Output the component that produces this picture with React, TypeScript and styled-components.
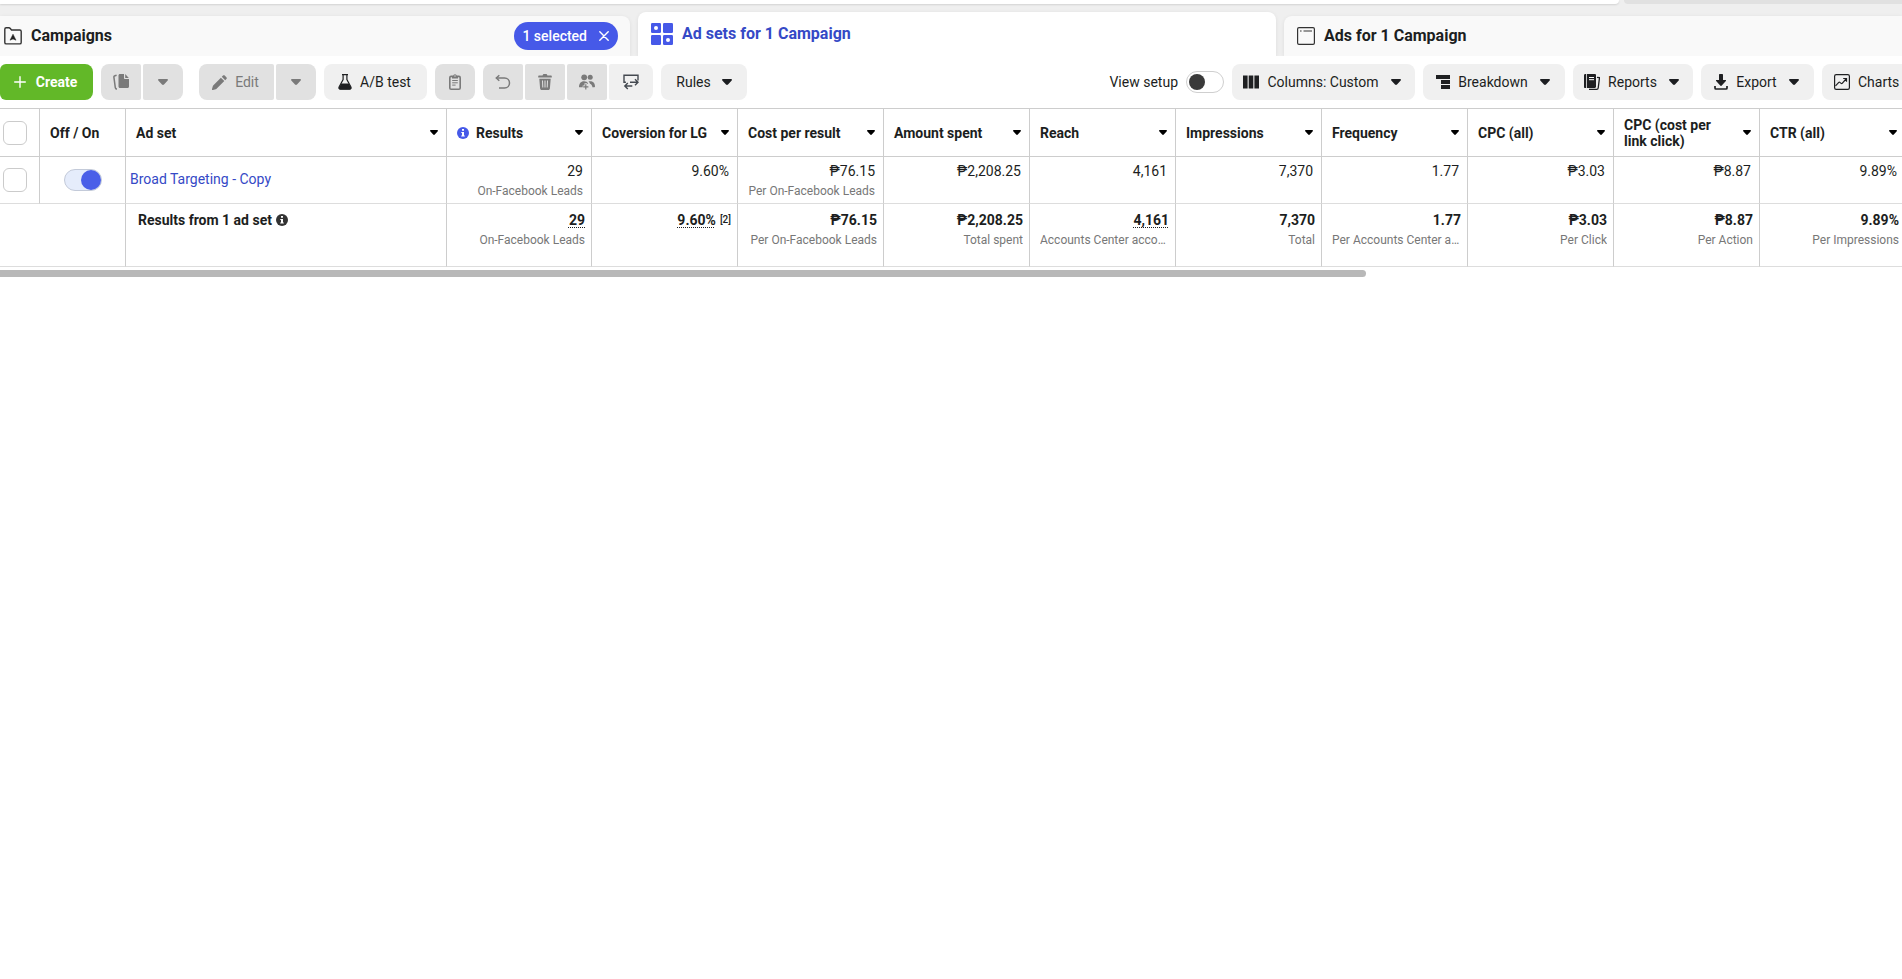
import React from "react";
import styled, { createGlobalStyle, css } from "styled-components";

const color = {
  ink: "#1c1e21",
  icon: "#1f2022",
  muted: "#777777",
  disabled: "#7a7a7a",
  blue: "#4659e8",
  link: "#3549c6",
  green: "#62b828",
  line: "#cdcdcd",
  softLine: "#dddddd",
};

const GlobalStyle = createGlobalStyle`
  *, *::before, *::after { box-sizing: border-box; }
  body {
    margin: 0;
    background: #fff;
    color: ${color.ink};
    font-family: Roboto, "Liberation Sans", sans-serif;
    font-size: 14px;
    line-height: 20px;
    overflow-x: hidden;
  }
  button, input { font: inherit; color: inherit; margin: 0; }
  svg { display: block; flex: none; }
`;

/* ---------- Top strip and tabs ---------- */

const TabArea = styled.header`
  background: #efefef;
  overflow: hidden;
`;

const TopStrip = styled.div`
  display: grid;
  grid-template-columns: 1619fr 278fr;
  gap: 5px;
  height: 4px;
`;

const StripMain = styled.div`
  background: #fff;
  border-bottom-right-radius: 6px;
  box-shadow: 0 1px 2px rgba(0, 0, 0, 0.12);
`;

const StripSide = styled.div`
  background: #e1e1e1;
  border-bottom-left-radius: 4px;
`;

const TabList = styled.nav`
  display: grid;
  grid-template-columns: 630fr 638fr 618fr;
  align-items: end;
  gap: 8px;
  padding-top: 8px;
`;

const Tab = styled.div<{ $active?: boolean; $place?: "first" | "last" }>`
  display: flex;
  align-items: center;
  justify-content: space-between;
  height: ${(p) => (p.$active ? 44 : 40)}px;
  padding: 0 12px 0 ${(p) => (p.$place === "first" ? 4 : 13)}px;
  border-radius: ${(p) => (p.$place === "first" ? "0 8px 0 0" : p.$place === "last" ? "8px 0 0 0" : "8px 8px 0 0")};
  background: ${(p) => (p.$active ? "#fff" : "#f9f9f9")};
  box-shadow: 0 1px 4px rgba(0, 0, 0, 0.08);
`;

const TabLink = styled.a<{ $active?: boolean }>`
  display: flex;
  align-items: center;
  gap: 9px;
  color: ${(p) => (p.$active ? color.link : color.ink)};
  font-size: 16px;
  font-weight: 700;
  text-decoration: none;
  padding-bottom: ${(p) => (p.$active ? 1 : 0)}px;
`;

const SelectedPill = styled.button`
  display: flex;
  align-items: center;
  gap: 12px;
  height: 28px;
  padding: 0 9px 0 8px;
  border: 0;
  border-radius: 14px;
  background: ${color.blue};
  color: #fff;
  font-size: 14px;
  font-weight: 500;
`;

/* ---------- Toolbar ---------- */

const Toolbar = styled.div`
  display: flex;
  justify-content: space-between;
  padding: 8px 0;
  overflow: hidden;
`;

const ToolGroup = styled.div`
  display: flex;
  align-items: center;
  gap: 8px;
`;

const Split = styled.div<{ $spaced?: boolean }>`
  display: flex;
  gap: 2px;
  margin-right: ${(p) => (p.$spaced ? 8 : 0)}px;

  > button { border-radius: 2px; }
  > button:first-child { border-radius: 8px 2px 2px 8px; }
  > button:last-child { border-radius: 2px 8px 8px 2px; }
`;

const ToolButton = styled.button<{ $w?: number; $primary?: boolean; $edge?: boolean; $gap?: number; $end?: number }>`
  display: flex;
  align-items: center;
  justify-content: center;
  gap: ${(p) => p.$gap ?? 8}px;
  height: 36px;
  min-width: ${(p) => p.$w ?? 40}px;
  padding: 0 ${(p) => p.$end ?? 0}px 0 0;
  border: 0;
  border-radius: 8px;
  background: #f0f0f0;
  color: ${color.ink};
  white-space: nowrap;

  &:disabled {
    background: #e1e1e1;
    color: ${color.disabled};
  }

  ${(p) =>
    p.$primary &&
    css`
      background: ${color.green};
      color: #fff;
      font-weight: 700;
      border-radius: 6px 8px 8px 6px;
    `}

  ${(p) =>
    p.$edge &&
    css`
      justify-content: flex-start;
      padding-left: 12px;
      border-radius: 8px 0 0 8px;
    `}
`;

const CaretSlot = styled.span`
  display: flex;
  padding-left: 4px;
`;

const SetupLabel = styled.label`
  display: flex;
  align-items: center;
  gap: 8px;
`;

const Switch = styled.input<{ $solid?: boolean }>`
  appearance: none;
  display: flex;
  align-items: center;
  flex: none;
  width: 38px;
  height: 22px;
  padding: 0 ${(p) => (p.$solid ? 0 : 2)}px;
  border: 1px solid #cfcfcf;
  border-radius: 11px;
  background: #fff;

  &::before {
    content: "";
    width: ${(p) => (p.$solid ? 20 : 16)}px;
    height: ${(p) => (p.$solid ? 20 : 16)}px;
    border-radius: 50%;
    background: #3a3a3a;
  }

  &:checked {
    justify-content: flex-end;
    background: #e5ecfb;
    border-color: #c3cad9;
  }

  &:checked::before { background: #4a5fe8; }
`;

/* ---------- Table ---------- */

const TableScroller = styled.div`
  overflow: hidden;
`;

const Table = styled.table`
  table-layout: fixed;
  width: 1906px;
  min-width: 100%;
  border-collapse: separate;
  border-spacing: 0;
  border-top: 1px solid ${color.line};
`;

const HeadCell = styled.th`
  height: 48px;
  padding: 0 8px 0 10px;
  border-right: 1px solid ${color.line};
  border-bottom: 1px solid ${color.line};
  font-size: 14px;
  font-weight: 700;
  line-height: 16px;
  text-align: left;
  vertical-align: middle;
`;

const HeadInner = styled.div`
  display: flex;
  align-items: center;
  justify-content: space-between;
  gap: 12px;
`;

const HeadLabel = styled.span`
  display: flex;
  align-items: center;
  gap: 7px;
`;

const BodyCell = styled.td<{ $name?: boolean }>`
  height: 47px;
  padding: 4px 8px 0 10px;
  border-right: 1px solid ${color.line};
  border-bottom: 1px solid ${color.softLine};
  text-align: right;
  vertical-align: top;

  ${(p) =>
    p.$name &&
    css`
      padding: 0 4px 2px;
      text-align: left;
      vertical-align: middle;
    `}
`;

const CheckHead = styled(HeadCell)`
  padding: 0 3px;
`;

const CheckCell = styled(BodyCell)`
  padding: 0 3px;
  vertical-align: middle;
`;

const SwitchCell = styled(BodyCell)`
  padding: 0 20px 0 24px;
  vertical-align: middle;
`;

const FootCell = styled.td`
  height: 63px;
  padding: 6px 6px 0 10px;
  border-right: 1px solid ${color.line};
  border-bottom: 1px solid ${color.softLine};
  text-align: right;
  vertical-align: top;
  font-weight: 700;
`;

const FootTitle = styled.div`
  display: flex;
  align-items: center;
  gap: 4px;
  padding-left: 2px;
`;

const Checkbox = styled.input`
  appearance: none;
  display: block;
  width: 24px;
  height: 24px;
  border: 1px solid #cbcbcb;
  border-radius: 6px;
  background: #fff;
`;

const NameLink = styled.a`
  color: ${color.link};
  text-decoration: none;
`;

const SubText = styled.div`
  overflow: hidden;
  color: ${color.muted};
  font-size: 12px;
  font-weight: 400;
  text-overflow: ellipsis;
  white-space: nowrap;
`;

const Dotted = styled.span`
  text-decoration: underline dotted 1px;
  text-decoration-skip-ink: none;
  text-underline-offset: 2px;
`;

const Note = styled.sup`
  margin-left: 4px;
  font-size: 10px;
  font-weight: 500;
  line-height: 10px;
  vertical-align: 2px;
`;

const ScrollTrack = styled.div`
  padding-top: 3px;
`;

const ScrollThumb = styled.div`
  width: 71.8%;
  height: 7px;
  border-radius: 0 4px 4px 0;
  background: #b8b8b8;
`;

/* ---------- Icons ---------- */

const Caret = ({ small }: { small?: boolean }) => (
  <svg width={small ? 8 : 10} height={small ? 5 : 6} viewBox="0 0 10 6" aria-hidden="true" preserveAspectRatio="none">
    <path d="M1 0h8c.9 0 1.300.9.7 1.500L6 5.500c-.6.6-1.400.6-2 0L.3 1.500C-.3.9.1 0 1 0z" fill={small ? "#000" : "currentColor"} />
  </svg>
);

const InfoIcon = ({ fill }: { fill: string }) => (
  <svg width="12" height="12" viewBox="0 0 12 12" aria-hidden="true">
    <circle cx="6" cy="6" r="6" fill={fill} />
    <path d="M5 2.100h2v1.700H5zM4.300 4.900H7v3.600h.8v1H4.200v-1H5V5.900h-.7z" fill="#fff" />
  </svg>
);

const FolderIcon = () => (
  <svg width="18" height="18" viewBox="0 0 18 18" aria-hidden="true">
    <path d="M.8 2.300C.8 1.400 1.300.8 2.200.8h2.700c.6 0 1 .2 1.400.7l1.200 1.500h8.300c.9 0 1.400.6 1.400 1.400v11c0 .9-.5 1.500-1.400 1.500H2.200c-.9 0-1.400-.6-1.400-1.500z" fill="none" stroke="#333" strokeWidth="1.400" />
    <path d="M9 7.200l3 6-3-1.300-3 1.300z" fill="#222" stroke="#222" strokeWidth=".5" strokeLinejoin="round" />
  </svg>
);

const AdSetsIcon = () => (
  <svg width="22" height="22" viewBox="0 0 22 22" aria-hidden="true">
    <g fill={color.blue}>
      <rect width="10" height="10" rx="1.200" />
      <rect x="12" width="10" height="10" rx="1.200" />
      <rect y="12" width="10" height="10" rx="1.200" />
      <rect x="12" y="12" width="10" height="10" rx="1.200" />
    </g>
    <circle cx="5" cy="5" r="2" fill="#fff" />
    <circle cx="17" cy="17" r="2" fill="#fff" />
  </svg>
);

const AdsIcon = () => (
  <svg width="18" height="18" viewBox="0 0 18 18" aria-hidden="true">
    <rect x=".6" y=".6" width="16.800" height="16.800" rx="1.400" fill="none" stroke="#333" strokeWidth="1.200" />
    <path d="M3 4h1.600M6.500 4H15" stroke="#777" strokeWidth="1.400" />
  </svg>
);

const CloseIcon = () => (
  <svg width="10" height="10" viewBox="0 0 10 10" aria-hidden="true">
    <path d="M.8.8l8.400 8.400M9.200.8L.8 9.200" stroke="#fff" strokeWidth="1.400" strokeLinecap="round" />
  </svg>
);

const PlusIcon = () => (
  <svg width="12" height="12" viewBox="0 0 12 12" aria-hidden="true">
    <path d="M6 .7v10.600M.7 6h10.600" stroke="#fff" strokeWidth="1.400" strokeLinecap="round" />
  </svg>
);

const DuplicateIcon = () => (
  <svg width="16" height="16" viewBox="0 0 16 16" aria-hidden="true" fill="currentColor">
    <path d="M7 0h4v4.300c0 .5.300.7.700.7H16v7.500c0 .8-.6 1.500-1.500 1.500H7c-.9 0-1.500-.7-1.500-1.500v-11C5.500.6 6.100 0 7 0z" />
    <path d="M12.200 0l3.600 3.900h-3.600z" />
    <path d="M3.600 1.200L1.900 1.700c-.7.200-1.100.8-1 1.500L2.300 13.600c.1.800.6 1.300 1.600 1.600" fill="none" stroke="currentColor" strokeWidth="1.500" />
  </svg>
);

const PencilIcon = () => (
  <svg width="15" height="15" viewBox="0 0 15 15" aria-hidden="true" fill="currentColor">
    <path d="M11 .6c.5-.6 1.200-.6 1.700 0l1.700 1.700c.5.5.5 1.200 0 1.700l-1.200 1.200-3.400-3.400zM8.900 2.700l3.400 3.400-7.500 7.500c-.3.300-.6.500-1 .6L1 15c-.7.100-1.100-.3-1-1l.8-2.800c.1-.4.300-.7.600-1z" />
  </svg>
);

const FlaskIcon = () => (
  <svg width="14" height="16" viewBox="0 0 14 16" aria-hidden="true">
    <path d="M4 .6h6M5.100.6v5L1.200 12.800c-.7 1.300 0 2.300 1.300 2.300h9c1.300 0 2-1 1.300-2.300L8.900 5.600v-5" fill="none" stroke={color.icon} strokeWidth="1.200" />
    <path d="M3.200 9.500h7.600l2.200 4c.5 1-.1 2-1.300 2H2.300c-1.200 0-1.800-1-1.300-2z" fill={color.icon} />
  </svg>
);

const ClipboardIcon = () => (
  <svg width="12" height="16" viewBox="0 0 12 16" aria-hidden="true">
    <rect x=".8" y="2.400" width="10.400" height="12.800" rx="1.300" fill="none" stroke="currentColor" strokeWidth="1.600" />
    <path d="M3 4.500V2.300h1.200C4.300.9 5 .2 6 .2s1.700.7 1.800 2.100H9v2.200z" fill="currentColor" />
    <circle cx="6" cy="2" r=".7" fill="#e1e1e1" />
    <path d="M3.200 6.500h5.600M3.200 8.800h5.600M3.200 11.100h3.400" stroke="currentColor" strokeWidth="1" />
  </svg>
);

const UndoIcon = () => (
  <svg width="16" height="16" viewBox="0 0 16 16" aria-hidden="true">
    <path d="M1.500 4H9.500c3 0 5 2.200 5 5s-2 5-5 5H4" fill="none" stroke="currentColor" strokeWidth="1.500" />
    <path d="M4.300 1.300L1.300 4l3 2.700" fill="none" stroke="currentColor" strokeWidth="1.500" />
  </svg>
);

const TrashIcon = () => (
  <svg width="14" height="16" viewBox="0 0 14 16" aria-hidden="true">
    <path d="M4.600 1.500C4.700.6 5.200 0 6.100 0h1.800c.9 0 1.400.6 1.500 1.500h3.400c.6 0 1 .4 1 1V3.500H.2V2.500c0-.6.4-1 1-1zM1.300 4.700h11.400l-.8 9.800c-.1.900-.7 1.500-1.600 1.500H3.700c-.9 0-1.500-.6-1.600-1.500z" fill="currentColor" />
    <path d="M4.500 6.500l.3 7M7 6.500v7M9.500 6.500l-.3 7" stroke="#e1e1e1" strokeWidth="1" />
  </svg>
);

const PeopleIcon = () => (
  <svg width="16" height="16" viewBox="0 0 16 16" aria-hidden="true">
    <g fill="currentColor">
      <circle cx="5.200" cy="3.300" r="2.900" />
      <circle cx="11.200" cy="3.300" r="2.500" />
      <path d="M0 13c0-3.500 1.800-5.800 5-5.800 2 0 3.400.8 4.200 2.300-1.700.2-3.200 1.800-3.200 3.800H.5c-.3 0-.5 0-.5-.3zM9.500 7.500c3.700-.8 6.500 1.200 6.500 5 0 .5-.2.800-.6.800h-2c0-1.700-.9-3-2.400-3.600-.2-.8-.7-1.500-1.500-2.200z" />
    </g>
    <path d="M6.800 9.300v6.700M3.700 12.900h6.200" stroke="#e1e1e1" strokeWidth="2.600" />
    <path d="M6.800 10.300v5.300M4.200 12.900h5.200" stroke="currentColor" strokeWidth="1.200" />
  </svg>
);

const SwapIcon = () => (
  <svg width="16" height="16" viewBox="0 0 16 16" aria-hidden="true" fill="none" stroke="#444950" strokeWidth="1.400">
    <path d="M2.900 8.300H1V1.200h14v5.300" />
    <path d="M14.800 8.200H7M12 5.200l3 3-3 3M9.300 12H1.500M4.800 9l-3 3 3 3" />
  </svg>
);

const ColumnsIcon = () => (
  <svg width="16" height="14" viewBox="0 0 16 14" aria-hidden="true" fill={color.icon}>
    <path d="M0 .4h4.600v13.200H0zM5.700.4h4.600v13.200H5.700zM11.400.4H16v13.200h-4.600z" />
  </svg>
);

const BreakdownIcon = () => (
  <svg width="14" height="14" viewBox="0 0 14 14" aria-hidden="true" fill={color.icon}>
    <path d="M0 0h14v4H0zM5 5h9v4H5zM5 10h9v4H5z" />
  </svg>
);

const ReportsIcon = () => (
  <svg width="16" height="16" viewBox="0 0 16 16" aria-hidden="true">
    <path d="M0 1.500C0 .8.300.2 1 0h1.200v14H1c-.7 0-1-.6-1-1.300zM3 0h7.800c.7 0 1.200.5 1.200 1.200v11.600c0 .7-.5 1.200-1.200 1.200H3z" fill={color.icon} />
    <path d="M5 3.500h5M5 5.700h5" stroke="#fff" strokeWidth="1" />
    <path d="M13 3.300l2.500.4-1.300 10.300c-.1.900-.6 1.300-1.500 1.300H5" fill="none" stroke={color.icon} strokeWidth="1.300" />
  </svg>
);

const ExportIcon = () => (
  <svg width="14" height="16" viewBox="0 0 14 16" aria-hidden="true" fill={color.icon}>
    <path d="M5 .7C5 .2 5.300 0 5.700 0h2.600c.4 0 .7.200.7.700V6h2.500c.5 0 .7.500.4.900L7.500 11.700c-.3.400-.7.400-1 0L2.100 6.900c-.3-.4-.1-.9.4-.9H5z" />
    <path d="M1 12v2c0 .7.300 1 1 1h10c.7 0 1-.3 1-1v-2" fill="none" stroke={color.icon} strokeWidth="1.700" />
  </svg>
);

const ChartsIcon = () => (
  <svg width="16" height="16" viewBox="0 0 16 16" aria-hidden="true" fill="none" stroke={color.icon} strokeWidth="1.200">
    <rect x=".6" y=".6" width="14.800" height="14.800" rx="1.600" />
    <path d="M1.500 11.800l3.300-3.400c.4-.4.700-.4 1.100 0l1.200 1c.4.400.8.300 1.100 0L12 5M9.200 4.500h3.300v3.300" />
  </svg>
);

/* ---------- Data ---------- */

type Metric = {
  label: string;
  value: string;
  sub?: string;
  totalSub?: string;
  info?: boolean;
  dotted?: boolean;
  note?: string;
};

const metrics: Metric[] = [
  { label: "Results", value: "29", sub: "On-Facebook Leads", totalSub: "On-Facebook Leads", info: true, dotted: true },
  { label: "Coversion for LG", value: "9.60%", dotted: true, note: "[2]" },
  { label: "Cost per result", value: "₱76.15", sub: "Per On-Facebook Leads", totalSub: "Per On-Facebook Leads" },
  { label: "Amount spent", value: "₱2,208.25", totalSub: "Total spent" },
  { label: "Reach", value: "4,161", totalSub: "Accounts Center accounts", dotted: true },
  { label: "Impressions", value: "7,370", totalSub: "Total" },
  { label: "Frequency", value: "1.77", totalSub: "Per Accounts Center account" },
  { label: "CPC (all)", value: "₱3.03", totalSub: "Per Click" },
  { label: "CPC (cost per link click)", value: "₱8.87", totalSub: "Per Action" },
  { label: "CTR (all)", value: "9.89%", totalSub: "Per Impressions" },
];

const MenuCaret = () => (
  <CaretSlot>
    <Caret />
  </CaretSlot>
);

export default function App() {
  return (
    <>
      <GlobalStyle />
      <TabArea>
        <TopStrip>
          <StripMain />
          <StripSide />
        </TopStrip>
        <TabList aria-label="Levels">
          <Tab $place="first">
            <TabLink href="#campaigns">
              <FolderIcon />
              Campaigns
            </TabLink>
            <SelectedPill type="button" aria-label="1 selected, clear selection">
              1 selected
              <CloseIcon />
            </SelectedPill>
          </Tab>
          <Tab $active>
            <TabLink $active href="#adsets" aria-current="page">
              <AdSetsIcon />
              Ad sets for 1 Campaign
            </TabLink>
          </Tab>
          <Tab $place="last">
            <TabLink href="#ads">
              <AdsIcon />
              Ads for 1 Campaign
            </TabLink>
          </Tab>
        </TabList>
      </TabArea>

      <main>
        <Toolbar>
          <ToolGroup>
            <ToolButton $primary $w={93} $gap={10} $end={2}>
              <PlusIcon />
              Create
            </ToolButton>
            <Split $spaced>
              <ToolButton disabled aria-label="Duplicate"><DuplicateIcon /></ToolButton>
              <ToolButton disabled aria-label="Duplicate options"><Caret /></ToolButton>
            </Split>
            <Split>
              <ToolButton disabled $w={75} $end={2}>
                <PencilIcon />
                Edit
              </ToolButton>
              <ToolButton disabled aria-label="Edit options"><Caret /></ToolButton>
            </Split>
            <ToolButton $w={103} $end={2}>
              <FlaskIcon />
              A/B test
            </ToolButton>
            <ToolButton disabled aria-label="Paste"><ClipboardIcon /></ToolButton>
            <Split>
              <ToolButton disabled aria-label="Undo"><UndoIcon /></ToolButton>
              <ToolButton disabled aria-label="Delete"><TrashIcon /></ToolButton>
              <ToolButton disabled aria-label="Audience"><PeopleIcon /></ToolButton>
              <ToolButton $w={44} aria-label="Move"><SwapIcon /></ToolButton>
            </Split>
            <ToolButton $w={86} $gap={7}>
              Rules
              <MenuCaret />
            </ToolButton>
          </ToolGroup>

          <ToolGroup>
            <SetupLabel>
              View setup
              <Switch type="checkbox" role="switch" />
            </SetupLabel>
            <ToolButton $w={183} $end={3}>
              <ColumnsIcon />
              Columns: Custom
              <MenuCaret />
            </ToolButton>
            <ToolButton $w={142} $end={2}>
              <BreakdownIcon />
              Breakdown
              <MenuCaret />
            </ToolButton>
            <ToolButton $w={120} $end={3}>
              <ReportsIcon />
              Reports
              <MenuCaret />
            </ToolButton>
            <ToolButton $w={113} $end={2}>
              <ExportIcon />
              Export
              <MenuCaret />
            </ToolButton>
            <ToolButton $w={80} $edge>
              <ChartsIcon />
              Charts
            </ToolButton>
          </ToolGroup>
        </Toolbar>

        <TableScroller>
          <Table>
            <colgroup>
              <col style={{ width: 40 }} />
              <col style={{ width: 86 }} />
              <col style={{ width: 321 }} />
              {metrics.map((m, i) => (
                <col key={m.label} style={{ width: i === 0 ? 145 : 146 }} />
              ))}
            </colgroup>
            <thead>
              <tr>
                <CheckHead scope="col">
                  <Checkbox type="checkbox" aria-label="Select all ad sets" />
                </CheckHead>
                <HeadCell scope="col">Off / On</HeadCell>
                <HeadCell scope="col">
                  <HeadInner>
                    Ad set
                    <Caret small />
                  </HeadInner>
                </HeadCell>
                {metrics.map((m) => (
                  <HeadCell key={m.label} scope="col">
                    <HeadInner>
                      <HeadLabel>
                        {m.info && <InfoIcon fill={color.blue} />}
                        {m.label}
                      </HeadLabel>
                      <Caret small />
                    </HeadInner>
                  </HeadCell>
                ))}
              </tr>
            </thead>
            <tbody>
              <tr>
                <CheckCell>
                  <Checkbox type="checkbox" aria-label="Select Broad Targeting - Copy" />
                </CheckCell>
                <SwitchCell>
                  <Switch $solid type="checkbox" role="switch" defaultChecked aria-label="Broad Targeting - Copy off or on" />
                </SwitchCell>
                <BodyCell $name>
                  <NameLink href="#adset">Broad Targeting - Copy</NameLink>
                </BodyCell>
                {metrics.map((m) => (
                  <BodyCell key={m.label}>
                    {m.value}
                    {m.sub && <SubText>{m.sub}</SubText>}
                  </BodyCell>
                ))}
              </tr>
            </tbody>
            <tfoot>
              <tr>
                <FootCell colSpan={2} />
                <FootCell>
                  <FootTitle>
                    Results from 1 ad set
                    <InfoIcon fill="#333" />
                  </FootTitle>
                </FootCell>
                {metrics.map((m) => (
                  <FootCell key={m.label}>
                    {m.dotted ? <Dotted>{m.value}</Dotted> : m.value}
                    {m.note && <Note>{m.note}</Note>}
                    {m.totalSub && <SubText>{m.totalSub}</SubText>}
                  </FootCell>
                ))}
              </tr>
            </tfoot>
          </Table>
          <ScrollTrack>
            <ScrollThumb />
          </ScrollTrack>
        </TableScroller>
      </main>
    </>
  );
}
